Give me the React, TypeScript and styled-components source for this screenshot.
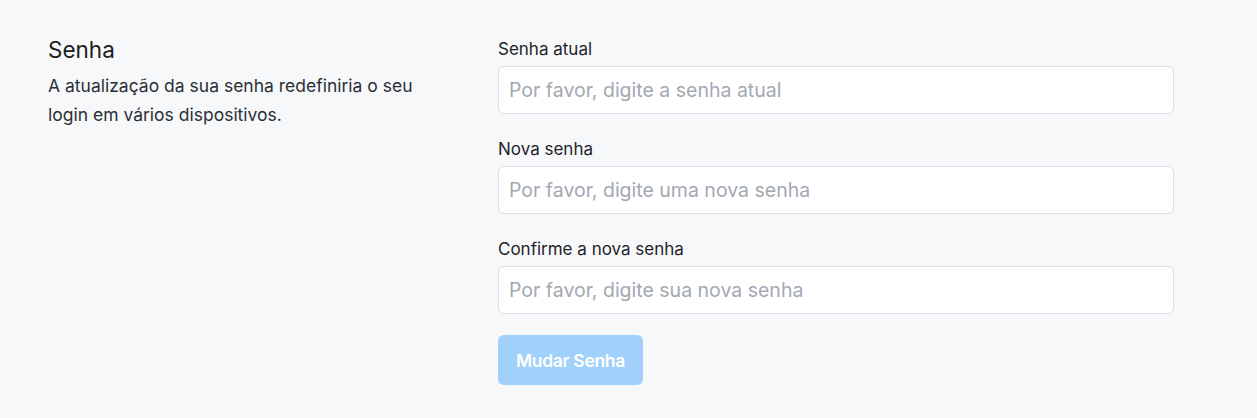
import React from 'react';
import styled, { createGlobalStyle } from 'styled-components';

const GlobalStyle = createGlobalStyle`
  html, body {
    margin: 0;
    padding: 0;
    background: #f7f8fa;
  }
  body {
    font-family: Inter, "Noto Sans", "Liberation Sans", sans-serif;
    color: #1f2329;
  }
  * {
    box-sizing: border-box;
  }
`;

const Page = styled.div`
  min-height: 418px;
  background: #f7f8fa;
  padding: 37px 48px;
  display: grid;
  grid-template-columns: 450px 676px;
`;

const Intro = styled.div`
  display: flex;
  flex-direction: column;
`;

const Title = styled.h2`
  margin: -1px 0 0;
  font-size: 22.5px;
  font-weight: 400;
  line-height: 28px;
  color: #1a1d21;
`;

const Description = styled.p`
  margin: 7px 0 0;
  width: 390px;
  font-size: 17.5px;
  line-height: 29px;
  color: #2b2f36;
`;

const Form = styled.form`
  display: flex;
  flex-direction: column;
  gap: 23px;
`;

const Field = styled.label`
  display: flex;
  flex-direction: column;
  gap: 5px;
`;

const FieldLabel = styled.span`
  font-size: 17px;
  line-height: 24px;
  color: #1f2329;
`;

const Input = styled.input`
  height: 48px;
  width: 100%;
  padding: 0 10px;
  border: 1px solid #dcdfe5;
  border-radius: 6px;
  background: #ffffff;
  font-family: inherit;
  font-size: 19.5px;
  color: #1f2329;
  outline: none;

  &::placeholder {
    color: #a3a8b2;
  }
`;

const SubmitButton = styled.button<{ $disabled?: boolean }>`
  align-self: flex-start;
  margin-top: -2px;
  width: 145px;
  height: 50px;
  border: none;
  border-radius: 6px;
  background: ${(p) => (p.$disabled ? '#a1d0fb' : '#1890ff')};
  color: #ffffff;
  font-family: inherit;
  font-size: 17.5px;
  font-weight: 600;
  letter-spacing: -0.3px;
  cursor: ${(p) => (p.$disabled ? 'not-allowed' : 'pointer')};
`;

const fields = [
  { label: 'Senha atual', placeholder: 'Por favor, digite a senha atual' },
  { label: 'Nova senha', placeholder: 'Por favor, digite uma nova senha' },
  { label: 'Confirme a nova senha', placeholder: 'Por favor, digite sua nova senha' },
];

export default function App() {
  return (
    <>
      <GlobalStyle />
      <Page>
        <Intro>
          <Title>Senha</Title>
          <Description>
            A atualização da sua senha redefiniria o seu login em vários dispositivos.
          </Description>
        </Intro>
        <Form onSubmit={(e) => e.preventDefault()}>
          {fields.map((f) => (
            <Field key={f.label}>
              <FieldLabel>{f.label}</FieldLabel>
              <Input type="password" placeholder={f.placeholder} />
            </Field>
          ))}
          <SubmitButton type="submit" $disabled>
            Mudar Senha
          </SubmitButton>
        </Form>
      </Page>
    </>
  );
}
